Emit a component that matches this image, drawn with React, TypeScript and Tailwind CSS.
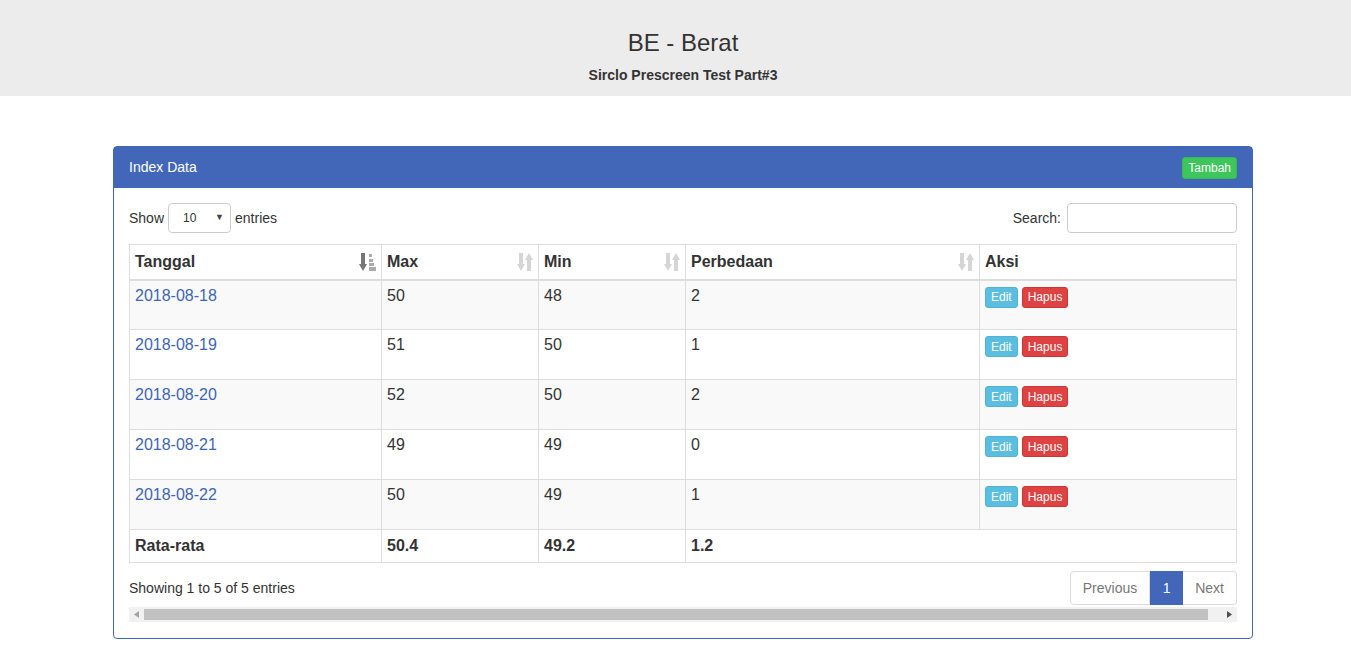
import React from "react";

const rows = [
  { d: "2018-08-18", max: "50", min: "48", diff: "2" },
  { d: "2018-08-19", max: "51", min: "50", diff: "1" },
  { d: "2018-08-20", max: "52", min: "50", diff: "2" },
  { d: "2018-08-21", max: "49", min: "49", diff: "0" },
  { d: "2018-08-22", max: "50", min: "49", diff: "1" },
];

function SortBoth() {
  return (
    <svg width="16" height="18" viewBox="0 0 16 18" className="shrink-0">
      <g fill="#d5d5d5">
        <rect x="2" y="0" width="4" height="12" />
        <polygon points="0,11 8,11 4,18" />
        <rect x="10" y="6" width="4" height="12" />
        <polygon points="8,7 16,7 12,0" />
      </g>
    </svg>
  );
}

function SortAsc() {
  return (
    <svg width="17" height="18" viewBox="0 0 17 18" className="shrink-0">
      <g fill="#777">
        <rect x="2" y="0" width="4" height="12" />
        <polygon points="0,11 8,11 4,18" />
      </g>
      <g fill="#aaa">
        <rect x="10" y="1" width="3" height="3" />
        <rect x="10" y="6" width="4" height="3" />
        <rect x="10" y="10" width="5" height="3" />
        <rect x="10" y="14" width="7" height="4" />
      </g>
    </svg>
  );
}

export default function App() {
  const font = { fontFamily: '"Liberation Sans", Arial, sans-serif' };
  return (
    <div className="w-[1351px] h-[658px] overflow-hidden bg-white">
      <div className="w-[1366px] min-h-[658px] bg-white text-[#333] text-[14px]" style={font}>
        <div className="bg-[#ececec] h-[96px] pt-[30px] text-center">
          <div className="text-[24px] leading-[26px]">BE - Berat</div>
          <div className="mt-[9px] text-[14px] leading-[20px] font-bold">Sirclo Prescreen Test Part#3</div>
        </div>

        <div className="mx-[113px] mt-[50px] border border-[#4267b8] rounded-[4px] bg-white">
          <div className="h-[41px] bg-[#4267b8] flex items-center justify-between px-[15px] text-white">
            <span className="text-[14px]">Index Data</span>
            <button className="h-[22px] px-[5px] rounded-[3px] bg-[#3ec55c] border border-[#38b854] text-[12px] text-white leading-none">Tambah</button>
          </div>
          <div className="p-[15px] pb-[16px]">
            <div className="flex items-center justify-between h-[30px]">
              <div className="flex items-center gap-[4px]">
                <span>Show</span>
                <div className="w-[63px] h-[30px] border border-[#ccc] rounded-[4px] flex items-center justify-between pl-[14px] pr-[6px] text-[12px]">
                  <span>10</span>
                  <span className="text-[9px] text-[#444]">▼</span>
                </div>
                <span>entries</span>
              </div>
              <div className="flex items-center gap-[6px]">
                <span>Search:</span>
                <div className="w-[170px] h-[30px] border border-[#ccc] rounded-[4px]" />
              </div>
            </div>

            <table className="mt-[11px] w-full border-collapse border border-[#ddd] text-[16px]">
              <colgroup>
                <col className="w-[252px]" />
                <col className="w-[157px]" />
                <col className="w-[147px]" />
                <col className="w-[294px]" />
                <col />
              </colgroup>
              <thead>
                <tr className="h-[35px]">
                  {["Tanggal", "Max", "Min", "Perbedaan"].map((h, i) => (
                    <th key={h} className="border border-[#ddd] border-b-2 border-b-[#ddd] px-[5px] text-left font-bold">
                      <div className="flex items-center justify-between">
                        <span>{h}</span>
                        {i === 0 ? <SortAsc /> : <SortBoth />}
                      </div>
                    </th>
                  ))}
                  <th className="border border-[#ddd] border-b-2 px-[5px] text-left font-bold">Aksi</th>
                </tr>
              </thead>
              <tbody>
                {rows.map((r, i) => (
                  <tr key={r.d} className={`h-[50px] align-top ${i % 2 === 0 ? "bg-[#f9f9f9]" : "bg-white"}`}>
                    <td className="border border-[#ddd] px-[5px] pt-[5px] leading-[20px] text-[#3d66b6]">{r.d}</td>
                    <td className="border border-[#ddd] px-[5px] pt-[5px] leading-[20px]">{r.max}</td>
                    <td className="border border-[#ddd] px-[5px] pt-[5px] leading-[20px]">{r.min}</td>
                    <td className="border border-[#ddd] px-[5px] pt-[5px] leading-[20px]">{r.diff}</td>
                    <td className="border border-[#ddd] px-[5px] pt-[6px]">
                      <div className="flex gap-[4px]">
                        <button className="h-[21px] px-[5px] rounded-[3px] bg-[#5bbde0] border border-[#4fb3d6] text-white text-[12px] leading-none">Edit</button>
                        <button className="h-[21px] px-[5px] rounded-[3px] bg-[#de4242] border border-[#c93838] text-white text-[12px] leading-none">Hapus</button>
                      </div>
                    </td>
                  </tr>
                ))}
                <tr className="h-[33px] font-bold">
                  <td className="border border-[#ddd] px-[5px]">Rata-rata</td>
                  <td className="border border-[#ddd] px-[5px]">50.4</td>
                  <td className="border border-[#ddd] px-[5px]">49.2</td>
                  <td className="border border-[#ddd] border-r-0 px-[5px]">1.2</td>
                  <td className="border border-[#ddd] border-l-0 px-[5px]"></td>
                </tr>
              </tbody>
            </table>

            <div className="flex items-center justify-between mt-[8px]">
              <span>Showing 1 to 5 of 5 entries</span>
              <div className="flex h-[34px] text-[14px]">
                <div className="px-[12px] flex items-center border border-[#ddd] rounded-l-[4px] text-[#777]">Previous</div>
                <div className="w-[33px] flex items-center justify-center bg-[#4267b8] border border-[#4267b8] text-white">1</div>
                <div className="px-[12px] flex items-center border border-[#ddd] border-l-0 rounded-r-[4px] text-[#777]">Next</div>
              </div>
            </div>

            <div className="mt-[2px] h-[15px] bg-[#f1f1f1] flex items-center">
              <div className="w-[15px] flex justify-center">
                <svg width="5" height="7" viewBox="0 0 5 7"><polygon points="5,0 5,7 0,3.5" fill="#a3a3a3" /></svg>
              </div>
              <div className="flex-1 h-[11px] bg-[#c1c1c1] mr-[14px]" />
              <div className="w-[15px] flex justify-center">
                <svg width="5" height="7" viewBox="0 0 5 7"><polygon points="0,0 0,7 5,3.5" fill="#505050" /></svg>
              </div>
            </div>
          </div>
        </div>
      </div>
    </div>
  );
}
